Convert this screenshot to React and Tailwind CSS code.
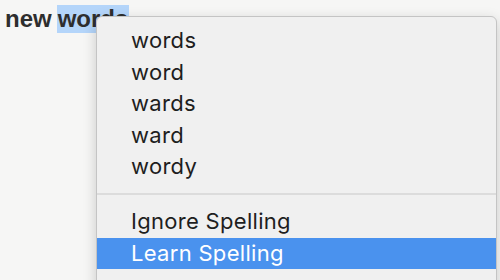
export default function App() {
  const suggestions = ["words", "word", "wards", "ward", "wordy"];

  return (
    <div
      className="relative w-[500px] h-[280px] overflow-hidden bg-[#f6f6f5]"
      style={{ fontFamily: "Inter, 'Liberation Sans', sans-serif" }}
    >
      {/* TEXT WITH SELECTION */}
      <div
        className="flex pt-[5px] pl-[5px] text-[24px] font-bold leading-[28px] text-[#2e2e2e]"
        style={{ fontFamily: "'Liberation Sans', Arial, sans-serif" }}
      >
        <span className="pr-[5px]">new</span>
        <span className="bg-[#b4d5fa] w-[72px] pl-[1px]">words</span>
      </div>

      {/* CONTEXT MENU */}
      <div className="absolute left-[96px] top-[16px] w-[401px] h-[290px] bg-[#f0f0f0] border border-[#c4c4c4] rounded-[6px] shadow-[0_4px_14px_rgba(0,0,0,0.18)] pt-[8px] text-[22px] tracking-[0.3px] text-[#1e1e1e]">
        {suggestions.map((s) => (
          <div key={s} className="h-[31.5px] flex items-center pl-[34px]">
            {s}
          </div>
        ))}
        <div className="h-[23px] flex items-center">
          <div className="w-full h-[2px] bg-[#dcdcdc]" />
        </div>
        <div className="h-[32px] flex items-center pl-[34px]">Ignore Spelling</div>
        <div className="h-[31px] flex items-center pl-[34px] bg-[#4a92ee] text-white">
          Learn Spelling
        </div>
      </div>
    </div>
  );
}
